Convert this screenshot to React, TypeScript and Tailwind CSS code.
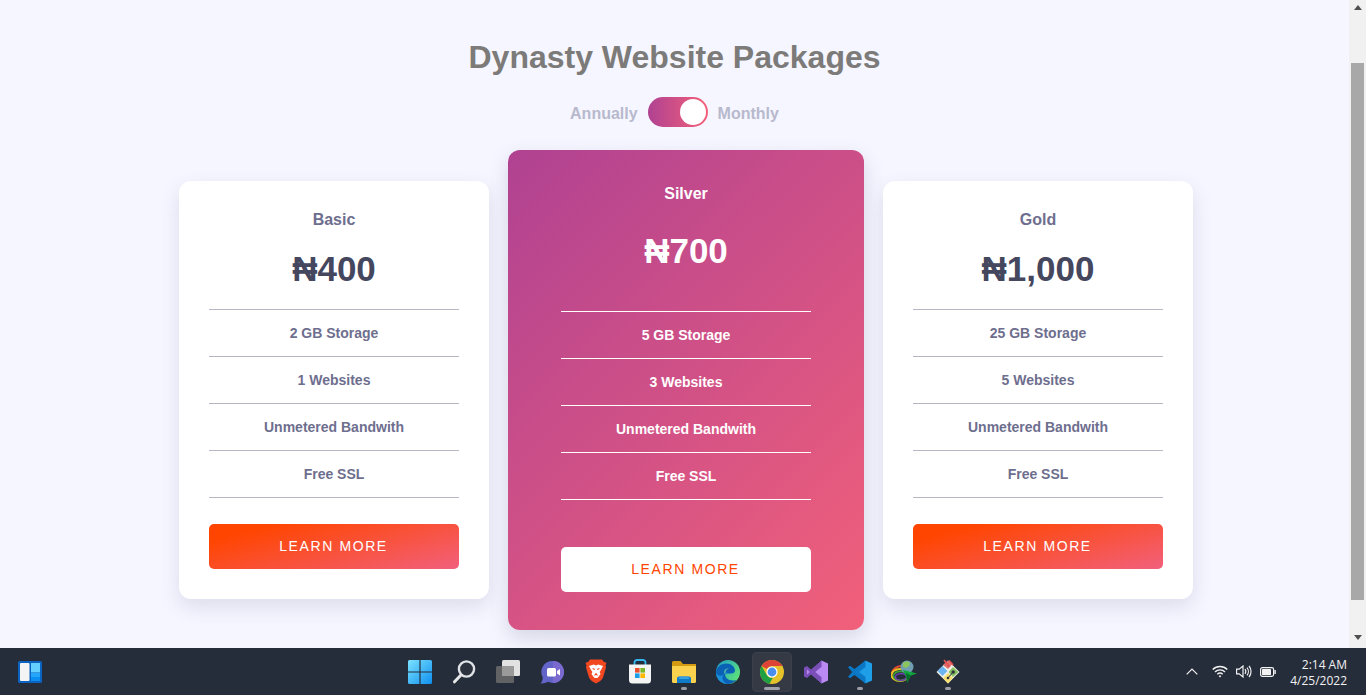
import React from "react";

const rows = (a: string, b: string) => [a, b, "Unmetered Bandwith", "Free SSL"];

function Plan({ name, price, features }: { name: string; price: string; features: string[] }) {
  return (
    <div className="w-[310px] rounded-[12px] bg-white px-[30px] pt-[30px] pb-[30px] shadow-[0_8px_20px_rgba(70,70,110,0.14)]">
      <h2 className="h-[18px] text-center text-[16px] leading-[18px] font-bold text-[#6e6e8e]">{name}</h2>
      <div className="mt-[19px] h-[41px] text-center text-[35px] leading-[41px] font-bold text-[#44475e]">{price}</div>
      <ul className="mt-[20px] border-b border-[#b5b5c3]">
        {features.map((f) => (
          <li key={f} className="flex h-[47px] items-center justify-center border-t border-[#b5b5c3] text-[14px] font-bold text-[#6e6e8e]">
            {f}
          </li>
        ))}
      </ul>
      <button className="mt-[26px] flex h-[45px] w-full items-center justify-center rounded-[5px] bg-[linear-gradient(165deg,#ff4500_15%,#f2607c_100%)] pr-[1px] text-[14px] tracking-[1.6px] text-white">
        LEARN MORE
      </button>
    </div>
  );
}

function Featured({ name, price, features }: { name: string; price: string; features: string[] }) {
  return (
    <div className="w-[356px] rounded-[12px] bg-[linear-gradient(135deg,#b04292_0%,#f2607a_100%)] px-[53px] pt-[35px] pb-[38px] shadow-[0_8px_20px_rgba(70,70,110,0.18)]">
      <h2 className="h-[18px] text-center text-[16px] leading-[18px] font-bold text-white">{name}</h2>
      <div className="mt-[27px] h-[41px] text-center text-[35px] leading-[41px] font-bold text-white">{price}</div>
      <ul className="mt-[40px] border-b border-white">
        {features.map((f) => (
          <li key={f} className="flex h-[47px] items-center justify-center border-t border-white text-[14px] font-bold text-white">
            {f}
          </li>
        ))}
      </ul>
      <button className="mt-[47px] flex h-[45px] w-full items-center justify-center rounded-[5px] bg-white pr-[1px] text-[14px] tracking-[1.6px] text-[#ff4500]">
        LEARN MORE
      </button>
    </div>
  );
}

function Slot({ children, dot, active }: { children: React.ReactNode; dot?: boolean; active?: boolean }) {
  return (
    <div className="relative flex h-[47px] w-[44px] items-center justify-center">
      {active && <div className="absolute top-[4px] left-[2px] h-[40px] w-[40px] rounded-[4px] border border-[#3a3f4c] bg-[#353944]" />}
      <div className="relative">{children}</div>
      {dot && !active && <div className="absolute bottom-[5px] left-[19px] h-[3px] w-[6px] rounded-full bg-[#9a9ca3]" />}
      {active && <div className="absolute bottom-[5px] left-[14px] h-[3px] w-[16px] rounded-full bg-[#9ea1a9]" />}
    </div>
  );
}

const WidgetsIcon = () => (
  <svg width="24" height="22" viewBox="0 0 24 22">
    <rect width="24" height="22" rx="1.5" fill="#0a63c0" />
    <rect x="2" y="2" width="9.5" height="18" rx="1" fill="#f4f4f4" />
    <rect x="13" y="2" width="9" height="9.5" fill="#63d0ff" />
    <rect x="13" y="12" width="9" height="4" fill="#26a6fb" />
    <rect x="13" y="16" width="9" height="4" fill="#0c8df0" />
  </svg>
);

const WinIcon = () => (
  <svg width="24" height="24" viewBox="0 0 24 24">
    <defs>
      <linearGradient id="w" x1="0" y1="0" x2="1" y2="1">
        <stop offset="0" stopColor="#7be3ff" />
        <stop offset="1" stopColor="#0f8fee" />
      </linearGradient>
    </defs>
    <path d="M0 1.5A1.5 1.5 0 0 1 1.5 0H11.4V11.4H0ZM12.6 0H22.5A1.5 1.5 0 0 1 24 1.5V11.4H12.6ZM0 12.6H11.4V24H1.5A1.5 1.5 0 0 1 0 22.5ZM12.6 12.6H24V22.5A1.5 1.5 0 0 1 22.5 24H12.6Z" fill="url(#w)" />
  </svg>
);

const SearchIcon = () => (
  <svg width="24" height="24" viewBox="0 0 24 24" fill="none">
    <circle cx="14.5" cy="9" r="7.6" stroke="#dfe3e6" strokeWidth="2.4" fill="#2c333f" />
    <path d="M9 15 L2.5 21.8" stroke="#e8e8e8" strokeWidth="3" strokeLinecap="round" />
  </svg>
);

const TaskViewIcon = () => (
  <svg width="24" height="24" viewBox="0 0 24 24">
    <rect x="6" y="0" width="18" height="16" rx="1.5" fill="#e2e2e2" />
    <rect x="0" y="6" width="18" height="17" rx="1.5" fill="#666" fillOpacity="0.93" />
    <rect x="6" y="6" width="12" height="10" fill="#9a9a9a" />
  </svg>
);

const ChatIcon = () => (
  <svg width="24" height="24" viewBox="0 0 24 24">
    <path d="M13 1A11 11 0 1 1 8 21.8C6 23 3 23.6 0.5 23.4C2 22 2.6 20.5 2.7 17.2A11 11 0 0 1 13 1Z" fill="#6264c8" />
    <path d="M13 1A11 11 0 0 1 13 23Z" fill="#7a6ad0" />
    <rect x="7" y="8" width="9" height="8.5" rx="1.6" fill="#fff" />
    <path d="M17 11L20 9V15.5L17 13.5Z" fill="#fff" />
  </svg>
);

const BraveIcon = () => (
  <svg width="22" height="25" viewBox="0 0 22 25">
    <path d="M5 0.5H17L19 3L21.5 3.8L20.6 6.2L21 8.6L18 18.5C17 21 14 23 11 24.5C8 23 5 21 4 18.5L1 8.6L1.4 6.2L0.5 3.8L3 3Z" fill="#f1481f" />
    <path d="M4 7L8.8 5.6L11 6.6L13.2 5.6L18 7L16 11L14.6 13L15.6 15L12.5 19H9.5L6.4 15L7.4 13L6 11Z" fill="#fff" />
    <path d="M7.6 9.5L9.8 10.6M14.4 9.5L12.2 10.6M9.5 16.5L11 14.6L12.5 16.5" stroke="#f1481f" strokeWidth="1.1" fill="none" />
  </svg>
);

const StoreIcon = () => (
  <svg width="24" height="25" viewBox="0 0 24 25">
    <path d="M6.5 6V3.5A2.5 2.5 0 0 1 9 1H15A2.5 2.5 0 0 1 17.5 3.5V6" stroke="#34b6ee" strokeWidth="1.8" fill="none" />
    <path d="M1 5.5H23V21A3.5 3.5 0 0 1 19.5 24.5H4.5A3.5 3.5 0 0 1 1 21Z" fill="#f4f4f4" />
    <rect x="7" y="9" width="4.6" height="4.6" fill="#e8502e" />
    <rect x="12.4" y="9" width="4.6" height="4.6" fill="#7ab82a" />
    <rect x="7" y="14.4" width="4.6" height="4.6" fill="#1a9ce8" />
    <rect x="12.4" y="14.4" width="4.6" height="4.6" fill="#fdb900" />
  </svg>
);

const FolderIcon = () => (
  <svg width="24" height="22" viewBox="0 0 24 22">
    <path d="M0 1.5A1.5 1.5 0 0 1 1.5 0H8.5L11 3H24V7H0Z" fill="#d39a12" />
    <path d="M0 5H24V20.5A1.5 1.5 0 0 1 22.5 22H1.5A1.5 1.5 0 0 1 0 20.5Z" fill="#fcd14e" />
    <path d="M5 22V17.5A2 2 0 0 1 7 15.5H17A2 2 0 0 1 19 17.5V22Z" fill="#0f7bc8" />
    <rect x="7" y="15.5" width="10" height="2.5" fill="#3aa0e0" />
  </svg>
);

const EdgeIcon = () => (
  <svg width="24" height="24" viewBox="0 0 24 24">
    <defs>
      <linearGradient id="e1" x1="0" y1="0" x2="1" y2="0.6">
        <stop offset="0" stopColor="#1a9bd0" />
        <stop offset="1" stopColor="#5ce07a" />
      </linearGradient>
    </defs>
    <circle cx="12" cy="12" r="12" fill="url(#e1)" />
    <path d="M0 12C0.5 7 5 3.5 10 3.5C15.5 3.5 19 7 19 10.5C19 12.5 17.5 13.5 15 13.5H9.5C8 17 12 20.5 17 20.5C18.5 20.5 19.5 20.3 20.5 19.8C18.5 22.5 15.3 24 12 24C5 24 0 19 0 12Z" fill="#0b62b5" />
    <path d="M9.5 13.5H14C11 12 7 13 6.5 17C6.1 20 8 22.6 10.8 23.9C5 23.5 0 19 0 12C1 16 5 17 7 14.5C7.5 13.5 8.5 13.5 9.5 13.5Z" fill="#1a90dc" />
    <path d="M8 11.5C8.5 9 11 8 13 8.3C11 9 9.5 10.5 9.5 13.5H8Z" fill="#6fe0b0" opacity="0.6" />
  </svg>
);

const ChromeIcon = () => (
  <svg width="24" height="24" viewBox="0 0 24 24">
    <circle cx="12" cy="12" r="12" fill="#e5c22a" />
    <path d="M12 0A12 12 0 0 1 22.4 6H12A6 6 0 0 0 6.8 9L1.6 6A12 12 0 0 1 12 0Z" fill="#dd4437" />
    <path d="M1.6 6L6.8 15A6 6 0 0 0 12.6 18L9.6 23.8A12 12 0 0 1 1.6 6Z" fill="#1fa045" />
    <circle cx="12" cy="12" r="5.6" fill="#fff" />
    <circle cx="12" cy="12" r="4.4" fill="#4a8ff0" />
  </svg>
);

const VSIcon = () => (
  <svg width="24" height="24" viewBox="0 0 24 24">
    <path d="M17.5 0.5L24 3.5V20.5L17.5 23.5L7 12Z" fill="#b88af2" />
    <path d="M17.5 0.5V7L11.5 12L17.5 17V23.5L7 14.5L3 18L0 16.5V7.5L3 6L7 9.5Z" fill="#7a50b8" />
    <path d="M3 9.5V14.5L5.8 12Z" fill="#b88af2" />
    <path d="M17.5 7L11.5 12L17.5 17Z" fill="#b88af2" />
  </svg>
);

const VSCodeIcon = () => (
  <svg width="24" height="24" viewBox="0 0 24 24">
    <path d="M17.5 0.5L24 3.5V20.5L17.5 23.5L7 12Z" fill="#1f9fe8" />
    <path d="M17.5 0.5V7L11 12L17.5 17V23.5L6.5 15L2 18.2L0 16.8L4.2 12L0 7.2L2 5.8L6.5 9Z" fill="#0a78c4" />
  </svg>
);

const IDMIcon = () => (
  <svg width="26" height="24" viewBox="0 0 26 24">
    <path d="M1 14C1 9 6 6 11 6" stroke="#e04a30" strokeWidth="2" fill="none" />
    <ellipse cx="9" cy="15" rx="8.5" ry="6" fill="none" stroke="#e8c020" strokeWidth="2" />
    <ellipse cx="9.5" cy="16" rx="7" ry="4.6" fill="none" stroke="#3ba03a" strokeWidth="1.6" />
    <ellipse cx="10" cy="17" rx="5.5" ry="3.4" fill="none" stroke="#7a3cc0" strokeWidth="1.4" />
    <circle cx="16" cy="7" r="6.5" fill="#6f9fb0" />
    <path d="M12 3C14 1 17 1 19 3L18 6L15 8L12 7Z" fill="#8cc45c" />
    <path d="M12 10L26 13.5L20 15.5L16 23L15.5 17.5Z" fill="#0fa83c" />
    <path d="M15 13L15.5 17.5L16 23L20 15.5Z" fill="#06702a" />
  </svg>
);

const GitIcon = () => (
  <svg width="24" height="26" viewBox="0 0 24 26">
    <path d="M12 1.5L23.5 13L12 24.5L0.5 13Z" fill="#f2f0e8" />
    <path d="M6.5 7L11.5 12L6.5 17L1.5 12Z" fill="#6cb4ef" />
    <path d="M17 8L22.5 13L17 18L12.5 13Z" fill="#86c060" />
    <path d="M12 14L17 19L12 24.5L7 19Z" fill="#f5df6e" />
    <path d="M7 6L12 1.5L16 5.5L12 10Z" fill="#e07070" />
    <circle cx="17.2" cy="13" r="1.7" fill="#2c333f" />
    <circle cx="12" cy="19" r="1.3" fill="#2c333f" />
    <path d="M8 1L13.5 8M13 1.5L17 6" stroke="#e65050" strokeWidth="1.8" />
    <path d="M17 13L12 19" stroke="#2c333f" strokeWidth="1" />
  </svg>
);

const Tray = () => (
  <div className="flex items-center">
    <svg width="12" height="7" viewBox="0 0 12 7" fill="none" className="mr-[14px]">
      <path d="M0.7 6.3L6 1L11.3 6.3" stroke="#f2f2f2" strokeWidth="1.2" />
    </svg>
    <svg width="16" height="13" viewBox="0 0 16 13" fill="none" className="mr-[8px]">
      <path d="M0.7 4.6C4.8 0.5 11.2 0.5 15.3 4.6M3 7C5.8 4.2 10.2 4.2 13 7M5.3 9.3C6.8 7.9 9.2 7.9 10.7 9.3" stroke="#f2f2f2" strokeWidth="1.4" />
      <path d="M6.8 11.2L8 10L9.2 11.2L8 12.6Z" fill="#f2f2f2" />
    </svg>
    <svg width="16" height="13" viewBox="0 0 16 13" fill="none" className="mr-[8px]">
      <path d="M0.6 4.2H3.2L7 1V12L3.2 8.8H0.6Z" stroke="#f2f2f2" strokeWidth="1.2" />
      <path d="M9 4.2C10 5.6 10 7.4 9 8.8M11 2.6C12.8 4.8 12.8 8.2 11 10.4M13 1C15.7 4 15.7 9 13 12" stroke="#f2f2f2" strokeWidth="1.2" />
    </svg>
    <svg width="16" height="10" viewBox="0 0 16 10" fill="none" className="mr-[14px]">
      <rect x="0.6" y="0.6" width="13" height="8.8" rx="1.8" stroke="#f2f2f2" strokeWidth="1.2" />
      <rect x="2" y="2" width="9" height="6" rx="0.6" fill="#f2f2f2" />
      <rect x="14.4" y="3" width="1.4" height="4" fill="#f2f2f2" />
    </svg>
    <div className="mt-[2px] flex flex-col items-end text-[12px] leading-[16px] text-[#f2f2f2] [font-family:'Open_Sans',sans-serif]">
      <span>2:14 AM</span>
      <span>4/25/2022</span>
    </div>
  </div>
);

export default function App() {
  return (
    <div className="flex h-[695px] w-[1366px] flex-col overflow-hidden bg-[#f5f6ff] [font-family:'Liberation_Sans',Arial,sans-serif]">
      <div className="flex h-[648px]">
        <main className="flex flex-1 flex-col">
          <h1 className="mt-[39px] h-[37px] text-center text-[32px] leading-[37px] font-bold text-[#7c7b79]">
            Dynasty Website Packages
          </h1>
          <div className="mt-[21px] flex h-[30px] items-center justify-center gap-[10px] text-[16px] font-bold text-[#b8b9cd]">
            <span className="mt-[4px]">Annually</span>
            <div className="flex h-[30px] w-[60px] items-center justify-end rounded-full bg-[linear-gradient(90deg,#b04292,#f4607a)] pr-[2px]">
              <div className="h-[26px] w-[26px] rounded-full bg-white" />
            </div>
            <span className="mt-[4px]">Monthly</span>
          </div>
          <section className="mt-[23px] flex items-center justify-center gap-[19px] pl-[23px]">
            <Plan name="Basic" price="₦400" features={rows("2 GB Storage", "1 Websites")} />
            <Featured name="Silver" price="₦700" features={rows("5 GB Storage", "3 Websites")} />
            <Plan name="Gold" price="₦1,000" features={rows("25 GB Storage", "5 Websites")} />
          </section>
        </main>
        <aside className="flex w-[17px] flex-col items-center bg-[#f1f1f1] pt-[5px]">
          <svg width="8" height="5" viewBox="0 0 8 5"><path d="M4 0L8 5H0Z" fill="#505050" /></svg>
          <div className="mt-[53px] h-[537px] w-[13px] bg-[#a8a8a8]" />
          <svg width="8" height="5" viewBox="0 0 8 5" className="mt-[35px]"><path d="M0 0H8L4 5Z" fill="#505050" /></svg>
        </aside>
      </div>
      <footer className="flex h-[47px] items-center bg-[#252c3a]">
        <div className="w-[398px] pl-[18px]">
          <WidgetsIcon />
        </div>
        <div className="flex">
          <Slot><WinIcon /></Slot>
          <Slot><SearchIcon /></Slot>
          <Slot><TaskViewIcon /></Slot>
          <Slot><ChatIcon /></Slot>
          <Slot><BraveIcon /></Slot>
          <Slot><StoreIcon /></Slot>
          <Slot dot><FolderIcon /></Slot>
          <Slot><EdgeIcon /></Slot>
          <Slot active><ChromeIcon /></Slot>
          <Slot><VSIcon /></Slot>
          <Slot dot><VSCodeIcon /></Slot>
          <Slot><IDMIcon /></Slot>
          <Slot dot><GitIcon /></Slot>
        </div>
        <div className="flex flex-1 justify-end pr-[19px]">
          <Tray />
        </div>
      </footer>
    </div>
  );
}
